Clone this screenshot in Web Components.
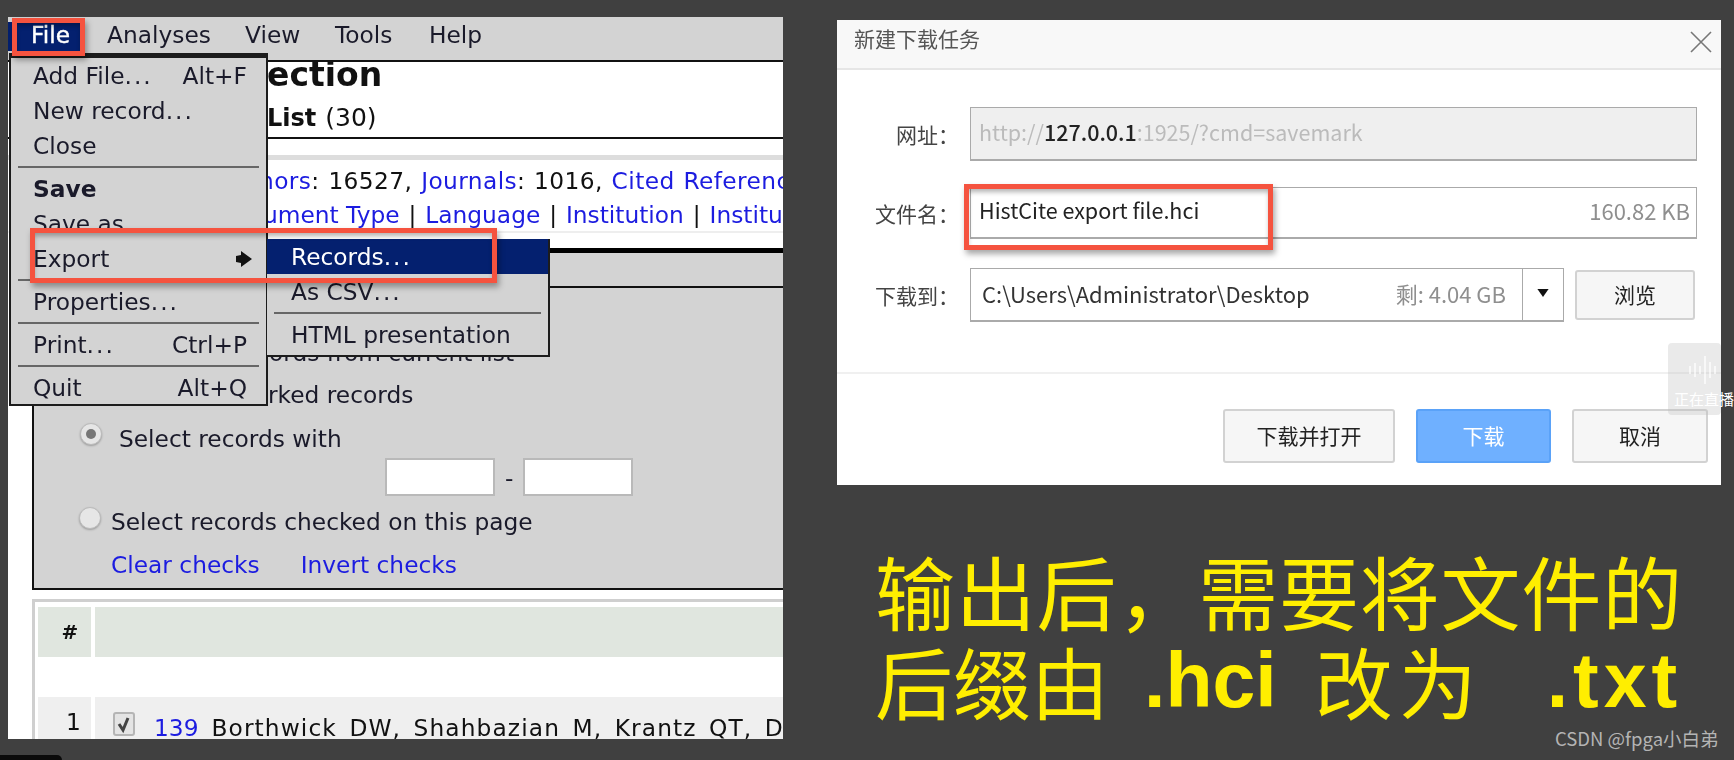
<!DOCTYPE html>
<html>
<head>
<meta charset="utf-8">
<style>
  html, body { margin: 0; height: 100%; background: #404040; overflow: hidden; }
  body { font-family: "Noto Sans CJK SC", sans-serif; }
</style>
</head>
<body>
<screen-layout>
  <histcite-window slot="left"></histcite-window>
  <download-dialog slot="right"></download-dialog>
  <caption-text slot="right"></caption-text>
</screen-layout>
<live-badge></live-badge>
<water-mark></water-mark>
<dock-pill></dock-pill>
<script>
const UI_FONT = `"DejaVu Sans", Verdana, sans-serif`;
const CN_FONT = `"Noto Sans CJK SC", "Liberation Sans", sans-serif`;

class ScreenLayout extends HTMLElement {
  connectedCallback() {
    this.attachShadow({ mode: "open" }).innerHTML = `
      <style>
        :host { display: flex; align-items: flex-start; padding: 17px 0 0 8px; }
        .right { margin-left: 54px; padding-top: 3px; display: flex; flex-direction: column; }
      </style>
      <slot name="left"></slot>
      <div class="right"><slot name="right"></slot></div>`;
  }
}

class MenuBar extends HTMLElement {
  connectedCallback() {
    this.attachShadow({ mode: "open" }).innerHTML = `
      <style>
        :host { display: grid; grid-template-columns: 99px 138px 90px 94px 1fr; height: 43px; background: #d3d3d3;
          border-bottom: 2px solid #111; align-items: center; font-size: 23.3px; color: #1a1a2a; padding-bottom: 0; }
        div { margin-top: -8px; }
        .active { background: #04206f; color: #fff; width: 72px; height: 29px; line-height: 25px; margin-top: -4px;
          padding-left: 23px; box-sizing: border-box; -webkit-text-stroke: .4px #fff; }
      </style>
      <div class="active">File</div><div>Analyses</div><div>View</div><div>Tools</div><div>Help</div>`;
  }
}

class MenuItem extends HTMLElement {
  connectedCallback() {
    this.attachShadow({ mode: "open" }).innerHTML = `
      <style>
        :host { display: flex; justify-content: space-between; align-items: center; height: 35px; padding: 0 19px 0 22px;
          color: #1a1a2a; white-space: nowrap; }
        :host([bold]) { font-weight: 700; }
        :host([active]) { background: #04206f; color: #fff; }
      </style>
      <div><slot></slot></div><slot name="end"></slot>`;
  }
}

class MenuSep extends HTMLElement {
  connectedCallback() {
    this.attachShadow({ mode: "open" }).innerHTML = `
      <style>
        :host { display: block; height: 8px; padding: 3px 7px 0; box-sizing: border-box; }
        div { height: 2px; background: #666; }
      </style><div></div>`;
  }
}

class PopupMenu extends HTMLElement {
  connectedCallback() {
    this.attachShadow({ mode: "open" }).innerHTML = `
      <style>
        :host { display: block; position: absolute; background: #d3d3d3; border: 2px solid #1c1c1c; box-sizing: border-box;
          font-size: 23.3px; z-index: 3; }
      </style><slot></slot>`;
  }
}

class RedBox extends HTMLElement {
  connectedCallback() {
    this.attachShadow({ mode: "open" }).innerHTML = `
      <style>
        :host { display: block; position: absolute; box-sizing: border-box; border: 5px solid #f5533f; z-index: 4;
          box-shadow: 2px 4px 6px rgba(0,0,0,.35), inset 0 4px 5px -1px rgba(0,0,0,.3); }
      </style>`;
  }
}

class RangeForm extends HTMLElement {
  connectedCallback() {
    this.attachShadow({ mode: "open" }).innerHTML = `
      <style>
        :host { display: block; margin-left: 24px; height: 304px; background: #d3d3d3; border: 2px solid #111; border-width: 2px 0 2px 2px;
          box-sizing: border-box; font-size: 23.3px; color: #1a1a2a; position: relative; }
        .row { display: flex; align-items: center; white-space: nowrap; }
        .r1 { height: 28px; margin-top: 50px; padding-left: 235px; }
        .r2 { height: 32px; margin-top: 12px; padding-left: 234px; }
        .r3 { height: 36px; margin-top: 10px; padding-left: 85px; }
        .r4 { height: 40px; margin-top: 1px; padding-left: 351px; gap: 10px; }
        .r4 i { display: block; width: 110px; height: 38px; background: #fff; border: 2px solid #b9b9b9; box-sizing: border-box; }
        .r5 { height: 34px; margin-top: 7px; padding-left: 77px; }
        .r6 { height: 34px; margin-top: 9px; padding-left: 77px; gap: 41px; color: #1c1ce0; }
        .radio { position: absolute; width: 22px; height: 22px; border-radius: 50%; background: #e6e6e6; border: 1px solid #bbb;
          box-shadow: 0 1px 2px rgba(0,0,0,.25); box-sizing: border-box; }
        .on::after { content: ""; position: absolute; left: 5px; top: 5px; width: 10px; height: 10px; border-radius: 50%; background: #777; }
      </style>
      <div class="row r1">ords from current list</div>
      <div class="row r2">rked records</div>
      <span class="radio on" style="left:46px;top:135px"></span>
      <div class="row r3">Select records with</div>
      <div class="row r4"><i></i><span>-</span><i></i></div>
      <span class="radio" style="left:45px;top:219px"></span>
      <div class="row r5">Select records checked on this page</div>
      <div class="row r6"><span>Clear checks</span><span>Invert checks</span></div>`;
  }
}

class RecordTable extends HTMLElement {
  connectedCallback() {
    this.attachShadow({ mode: "open" }).innerHTML = `
      <style>
        :host { display: grid; grid-template-columns: 53px 1fr; column-gap: 4px; grid-template-rows: 50px 40px 60px; margin: 9px 0 0 24px;
          padding: 5px 0 0 3px; border: solid #cfcfcf; border-width: 3px 0 0 3px; font-size: 23.3px; color: #111; background: #fff; }
        .h { background: #e0e6df; }
        .n { display: flex; align-items: center; justify-content: center; font-weight: 700; font-size: 20px; padding-left: 11px; }
        .gap { grid-column: 1 / 3; }
        .c { background: #efefef; }
        .num { text-align: center; padding: 11px 0 0 18px; box-sizing: border-box; }
        .rec { display: flex; white-space: nowrap; padding: 15px 0 0 18px; box-sizing: border-box; overflow: hidden; }
        .box { width: 22px; height: 24px; border: 2px solid #b5b5b5; border-radius: 3px; background: #e4e4e4; box-sizing: border-box; flex: none; margin-right: 19px; }
        .box svg { display: block; }
        a { color: #1c1ce0; margin-right: 13px; position: relative; top: 2px; height: 28px; }
        span.t { position: relative; top: 2px; letter-spacing: 1.1px; word-spacing: 4px; }
      </style>
      <div class="h n">#</div><div class="h"></div>
      <div class="gap"></div>
      <div class="c num">1</div>
      <div class="c rec"><div class="box"><svg width="18" height="20" viewBox="0 0 18 20"><path d="M4 10l4 6 5-12" fill="none" stroke="#444" stroke-width="3"/></svg></div><a>139</a><span class="t">Borthwick DW, Shahbazian M, Krantz QT, Do</span></div>`;
  }
}

class HistciteWindow extends HTMLElement {
  connectedCallback() {
    this.attachShadow({ mode: "open" }).innerHTML = `
      <style>
        :host { display: block; position: relative; width: 775px; height: 722px; background: #fff; overflow: hidden;
          font-family: ${UI_FONT}; filter: blur(.5px); }
        .dots { letter-spacing: 2px; }
        .head { height: 75px; border-bottom: 2px solid #111; padding-left: 259px; color: #111; white-space: nowrap; }
        .title { font-size: 33px; font-weight: 700; height: 46px; line-height: 26px; }
        .list { font-size: 25px; line-height: 36px; height: 36px; margin-top: -8px; }
        .list b { font-size: 24px; margin-right: 1px; }
        .links { margin-top: 16px; border-top: 5px solid #ddd; height: 78px; box-sizing: border-box; border-bottom: 2px solid #eee;
          font-size: 23.3px; color: #1c1ce0; white-space: nowrap; overflow: hidden; }
        .links div { height: 34px; line-height: 34px; }
        .l1 { padding: 4px 0 0 251px; letter-spacing: .4px; word-spacing: 1px; }
        .l2 { padding-left: 255px; }
        .links span { color: #111; }
        .links .pipe { margin: 0 1.5px; }
        .bar { margin: 15px 0 0 24px; height: 33px; background: #d3d3d3; border-top: 5px solid #000; }
      </style>
      <menu-bar></menu-bar>
      <div class="head">
        <div class="title">ection</div>
        <div class="list"><b>List</b> (30)</div>
      </div>
      <div class="links">
        <div class="l1">hors<span>: 16527,</span> Journals<span>: 1016,</span> Cited References</div>
        <div class="l2">ument Type<span class="pipe"> | </span>Language<span class="pipe"> | </span>Institution<span class="pipe"> | </span>Institution</div>
      </div>
      <div class="bar"></div>
      <range-form></range-form>
      <record-table></record-table>

      <popup-menu style="left:1px;top:36px;width:259px;height:353px;border-top-width:5px">
        <menu-item>Add File<span class="dots">...</span><span slot="end">Alt+F</span></menu-item>
        <menu-item>New record<span class="dots">...</span></menu-item>
        <menu-item>Close</menu-item>
        <menu-sep></menu-sep>
        <menu-item bold>Save</menu-item>
        <menu-item>Save as</menu-item>
        <menu-item>Export<svg slot="end" width="18" height="18" viewBox="0 0 18 18" style="margin-right:-6px"><path d="M1 6l5-1V1l11 8-11 8v-4l-5-1z" fill="#111"/></svg></menu-item>
        <menu-sep></menu-sep>
        <menu-item>Properties<span class="dots">...</span></menu-item>
        <menu-sep></menu-sep>
        <menu-item>Print<span class="dots">...</span><span slot="end">Ctrl+P</span></menu-item>
        <menu-sep></menu-sep>
        <menu-item>Quit<span slot="end">Alt+Q</span></menu-item>
      </popup-menu>
      <popup-menu style="left:259px;top:222px;width:283px;height:118px;border-left:0;border-top:0">
        <menu-item active style="padding-left:24px">Records<span class="dots">...</span></menu-item>
        <menu-item style="padding-left:24px">As CSV<span class="dots">...</span></menu-item>
        <menu-sep></menu-sep>
        <menu-item style="padding-left:24px">HTML presentation</menu-item>
      </popup-menu>
      <red-box style="left:4px;top:1px;width:73px;height:38px"></red-box>
      <red-box style="left:22px;top:211px;width:467px;height:55px"></red-box>`;
  }
}

class DialogButton extends HTMLElement {
  connectedCallback() {
    this.attachShadow({ mode: "open" }).innerHTML = `
      <style>
        :host { display: flex; align-items: center; justify-content: center; box-sizing: border-box; background: #f6f6f6; padding-bottom: 3px;
          border: 2px solid #d2d2d2; border-radius: 3px; color: #222; font-size: 21px; }
        :host([primary]) { background: #6fb0ff; border-color: #5aa2f8; color: #fff; }
      </style><slot></slot>`;
  }
}

class FieldRow extends HTMLElement {
  connectedCallback() {
    this.attachShadow({ mode: "open" }).innerHTML = `
      <style>
        :host { display: flex; align-items: center; }
        .label { width: 122px; margin-right: 11px; text-align: right; font-size: 21px; color: #444; flex: none; }
      </style>
      <div class="label">${this.getAttribute("label")}</div><slot></slot>`;
  }
}

class DownloadDialog extends HTMLElement {
  connectedCallback() {
    this.attachShadow({ mode: "open" }).innerHTML = `
      <style>
        :host { display: block; position: relative; width: 884px; height: 465px; background: #fff; font-family: ${CN_FONT}; filter: blur(.4px); }
        .top { background: #f8f8f8; border-bottom: 2px solid #e6e6e6; display: flex; align-items: center; justify-content: space-between; padding: 0 9px 12px 17px; height: 36px; }
        .top span { font-size: 21px; color: #555; }
        .top svg { margin-top: 8px; }
        .rows { padding: 37px 0 0 0; height: 304px; box-sizing: border-box; border-bottom: 2px solid #f0f0f0; }
        .input { width: 727px; box-sizing: border-box; border: 1px solid #aaa; border-bottom-width: 2px; display: flex; align-items: center; justify-content: space-between;
          font-size: 21.5px; padding: 0 6px 4px 8px; white-space: nowrap; }
        .url { height: 54px; background: #efefef; color: #bbb; }
        .url b { color: #222; font-weight: 500; }
        .name { height: 52px; color: #222; padding-bottom: 6px; }
        .name em, .left { font-style: normal; color: #8f8f8f; font-size: 22px; }
        .to { display: flex; gap: 11px; align-items: center; }
        .path { width: 594px; height: 54px; box-sizing: border-box; border: 1px solid #aaa; border-bottom-width: 2px; display: flex; align-items: stretch; font-size: 22px; color: #333; }
        .path .txt { flex: 1; display: flex; justify-content: space-between; align-items: center; padding: 0 16px 3px 11px; }
        .path .arrow { width: 40px; border-left: 1px solid #aaa; display: flex; align-items: center; justify-content: center; padding-bottom: 3px; }
        .foot { display: flex; justify-content: flex-end; gap: 21px; padding: 35px 13px 0 0; }
        .browse { width: 120px; height: 50px; }
      </style>
      <div class="top"><span>新建下载任务</span>
        <svg width="22" height="22" viewBox="0 0 22 22"><path d="M1 1l20 20M21 1L1 21" stroke="#777" stroke-width="1.6" fill="none"/></svg>
      </div>
      <div class="rows">
        <field-row label="网址："><div class="input url"><span>http://<b>127.0.0.1</b>:1925/?cmd=savemark</span></div></field-row>
        <field-row label="文件名：" style="margin-top:26px"><div class="input name"><span>HistCite export file.hci</span><em>160.82 KB</em></div></field-row>
        <field-row label="下载到：" style="margin-top:29px"><div class="to">
          <div class="path"><div class="txt"><span>C:\\Users\\Administrator\\Desktop</span><span class="left">剩: 4.04 GB</span></div>
            <div class="arrow"><svg width="12" height="8" viewBox="0 0 14 10"><path d="M0 0h14L7 10z" fill="#111"/></svg></div></div>
          <dialog-button class="browse">浏览</dialog-button></div></field-row>
      </div>
      <div class="foot">
        <dialog-button style="width:172px;height:54px">下载并打开</dialog-button>
        <dialog-button primary style="width:135px;height:54px">下载</dialog-button>
        <dialog-button style="width:136px;height:54px">取消</dialog-button>
      </div>
      <red-box style="left:127px;top:164px;width:309px;height:66px"></red-box>`;
  }
}

class CaptionText extends HTMLElement {
  connectedCallback() {
    this.attachShadow({ mode: "open" }).innerHTML = `
      <style>
        :host { display: block; margin: 59px 0 0 38px; color: #ffee00; font-family: ${CN_FONT}; font-size: 80px; line-height: 91px; white-space: nowrap; }
        div { display: flex; height: 91px; }
        .first { letter-spacing: .8px; }
        .cn { font-size: 78px; }
        b { font-family: "Liberation Sans", sans-serif; font-size: 77px; font-weight: 700; }
      </style>
      <div><span class="first">输出后，需要将文件的</span></div>
      <div><span class="cn">后缀由</span><b style="margin-left:35px">.hci</b><span class="cn" style="margin-left:38px;letter-spacing:6px">改为</span><b style="margin-left:64px;letter-spacing:5px">.txt</b></div>`;
  }
}

class LiveBadge extends HTMLElement {
  connectedCallback() {
    this.attachShadow({ mode: "open" }).innerHTML = `
      <style>
        :host { display: block; position: absolute; left: 1668px; top: 343px; width: 53px; height: 72px; background: rgba(190,190,190,.32);
          border-radius: 4px; font-family: ${CN_FONT}; }
        svg { position: absolute; left: 20px; top: 12px; }
        span { position: absolute; left: 6px; top: 45px; font-size: 15px; color: #fff; white-space: nowrap; }
      </style>
      <svg width="30" height="30" viewBox="0 0 30 30"><path d="M2 11v8M7 8v14M12 11v8M17 1v28M22 7v16M27 11v8" stroke="#fff" stroke-width="1.3"/></svg>
      <span>正在直播</span>`;
  }
}

class WaterMark extends HTMLElement {
  connectedCallback() {
    this.attachShadow({ mode: "open" }).innerHTML = `
      <style>
        :host { display: block; position: absolute; left: 1555px; top: 725px; font: 18.5px/26px ${CN_FONT}; color: #b4b4b4; white-space: nowrap; }
      </style>CSDN @fpga小白弟`;
  }
}

class DockPill extends HTMLElement {
  connectedCallback() {
    this.attachShadow({ mode: "open" }).innerHTML = `
      <style>
        :host { display: block; position: absolute; left: 0; top: 755px; width: 62px; height: 5px; background: #0a0a0a; border-radius: 0 6px 0 0; }
      </style>`;
  }
}

customElements.define("screen-layout", ScreenLayout);
customElements.define("menu-bar", MenuBar);
customElements.define("menu-item", MenuItem);
customElements.define("menu-sep", MenuSep);
customElements.define("popup-menu", PopupMenu);
customElements.define("red-box", RedBox);
customElements.define("range-form", RangeForm);
customElements.define("record-table", RecordTable);
customElements.define("histcite-window", HistciteWindow);
customElements.define("dialog-button", DialogButton);
customElements.define("field-row", FieldRow);
customElements.define("download-dialog", DownloadDialog);
customElements.define("caption-text", CaptionText);
customElements.define("live-badge", LiveBadge);
customElements.define("water-mark", WaterMark);
customElements.define("dock-pill", DockPill);
</script>
</body>
</html>
